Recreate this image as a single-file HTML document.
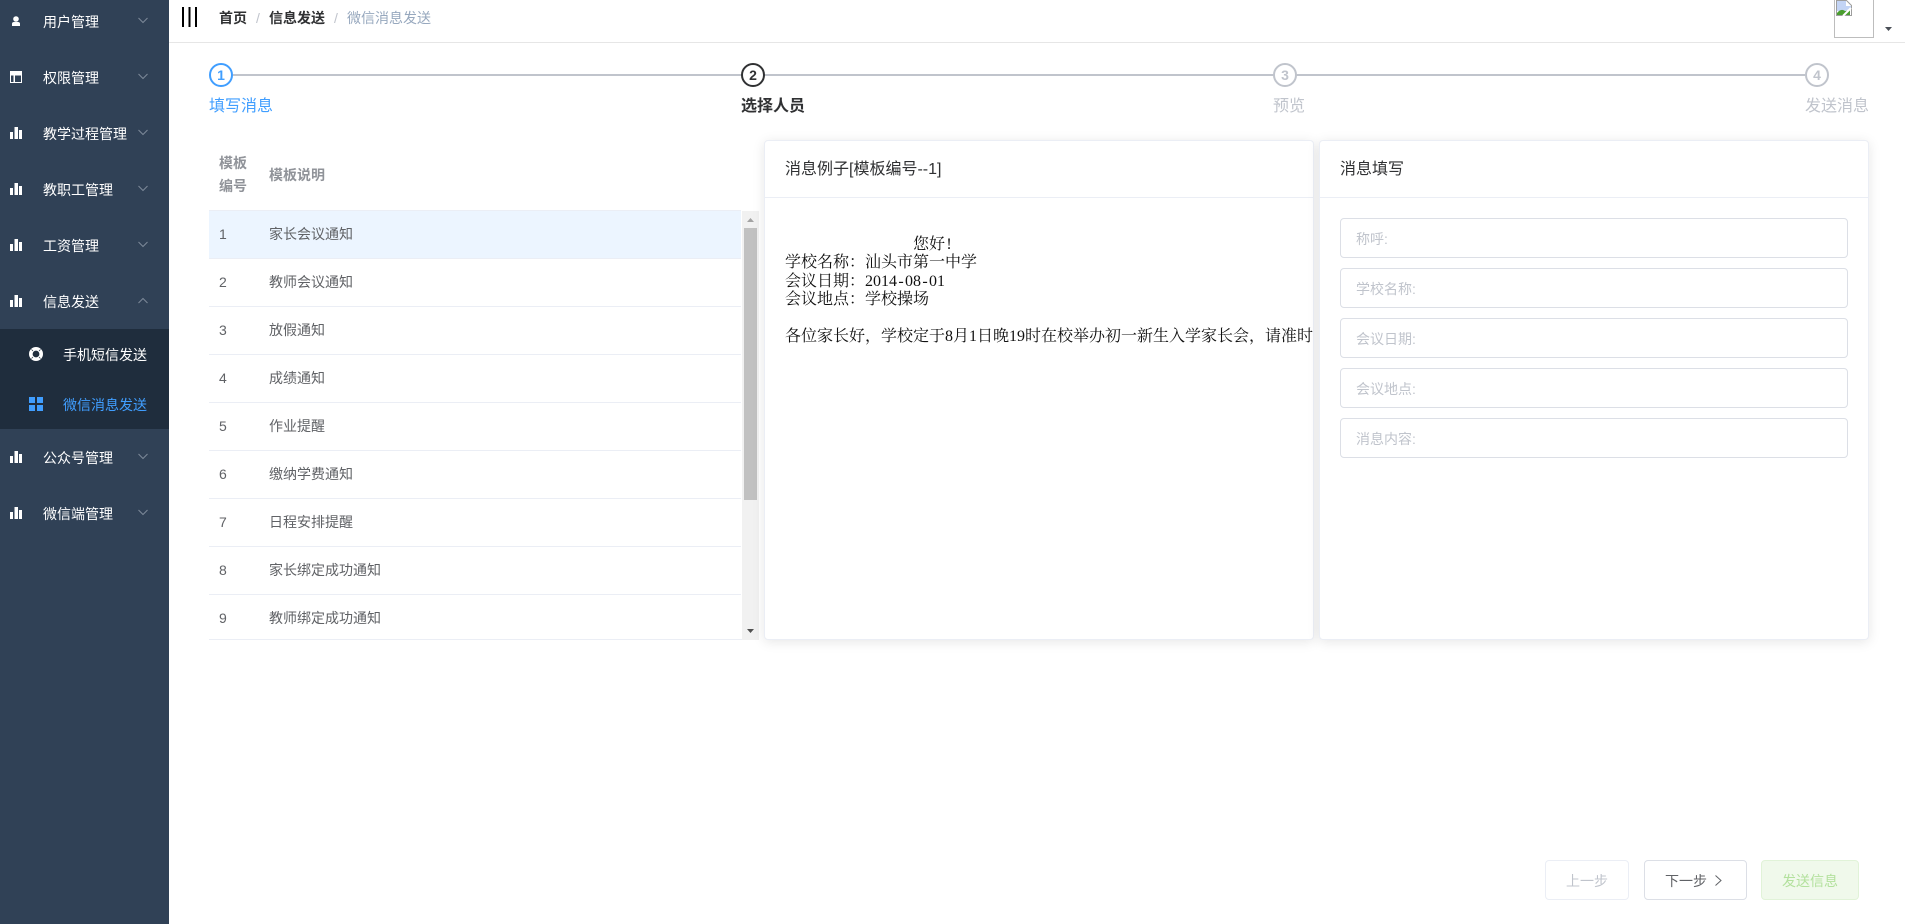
<!DOCTYPE html>
<html lang="zh-CN">
<head>
<meta charset="utf-8">
<title>微信消息发送</title>
<style>
html,body{margin:0;padding:0;width:1905px;height:924px;overflow:hidden;background:#fff}
body{font-family:"Liberation Sans","Noto Sans CJK SC",sans-serif;font-size:14px;color:#606266;position:relative}
.t{position:absolute;line-height:20px;white-space:nowrap}
.a{position:absolute}
#side{position:absolute;left:0;top:0;width:169px;height:924px;background:#304156;overflow:hidden}
#side .t{color:#fff}
#sub{position:absolute;left:0;top:329px;width:169px;height:100px;background:#1f2d3d}
.hl{position:absolute;left:209px;width:532px;height:1px;background:#ebeef5}
.n{left:219px}.d{left:269px}
.n,.d{color:#606266}
.th{color:#909399;font-weight:bold}
.card{position:absolute;top:140px;height:498px;background:#fff;border:1px solid #ebeef5;border-radius:4px;box-shadow:0 2px 12px rgba(0,0,0,.1);overflow:hidden;box-sizing:content-box}
.card .line{position:absolute;left:0;right:0;top:56px;height:1px;background:#ebeef5}
.inp{position:absolute;left:1340px;width:506px;height:38px;border:1px solid #dcdfe6;border-radius:4px;background:#fff}
.inp span{position:absolute;left:15px;top:10px;line-height:20px;color:#c0c4cc;white-space:nowrap}
.circle{position:absolute;top:63px;width:20px;height:20px;border:2px solid #c0c4cc;border-radius:50%;background:#fff;text-align:center;line-height:20px;font-size:14px;font-weight:bold;color:#c0c4cc}
.stept{position:absolute;top:96px;line-height:22px;font-size:16px;white-space:nowrap;color:#c0c4cc}
.btn{position:absolute;top:860px;height:38px;border:1px solid #dcdfe6;border-radius:4px;background:#fff}
.m{position:absolute;left:20px;line-height:20px;white-space:nowrap;font-family:"Liberation Serif","Noto Serif CJK SC",serif;font-size:16px;color:#111}
.m i{font-style:normal;display:inline-block;width:8px;text-align:center}
</style>
</head>
<body>
<div id="side">
  <div id="sub"></div>
  <svg class="a" style="left:0;top:0" width="169" height="540" viewBox="0 0 169 540">
    <!-- user -->
    <circle cx="16" cy="19" r="2.8" fill="#fff"/>
    <path d="M12 26v-2.200q0-1.800 2-1.800h4q2 0 2 1.800V26z" fill="#fff"/>
    <!-- table -->
    <path fill-rule="evenodd" d="M10 71h12v12H10zM11 75.500v6.500h2.500v-6.500zM15 75.500v6.500h6v-6.500z" fill="#fff"/>
    <!-- bars -->
    <path d="M10 132h3v7h-3zM14.500 127h3.500v12h-3.500zM19 130h3v9h-3z" fill="#fff"/>
    <path d="M10 188h3v7h-3zM14.500 183h3.500v12h-3.500zM19 186h3v9h-3z" fill="#fff"/>
    <path d="M10 244h3v7h-3zM14.500 239h3.500v12h-3.500zM19 242h3v9h-3z" fill="#fff"/>
    <path d="M10 300h3v7h-3zM14.500 295h3.500v12h-3.500zM19 298h3v9h-3z" fill="#fff"/>
    <path d="M10 456h3v7h-3zM14.500 451h3.500v12h-3.500zM19 454h3v9h-3z" fill="#fff"/>
    <path d="M10 512h3v7h-3zM14.500 507h3.500v12h-3.500zM19 510h3v9h-3z" fill="#fff"/>
    <!-- chevrons -->
    <g fill="none" stroke="#7d8a99" stroke-width="1">
      <path d="M138.500 18l4.500 4.500 4.500-4.500"/>
      <path d="M138.500 74l4.500 4.500 4.500-4.500"/>
      <path d="M138.500 130l4.500 4.500 4.500-4.500"/>
      <path d="M138.500 186l4.500 4.500 4.500-4.500"/>
      <path d="M138.500 242l4.500 4.500 4.500-4.500"/>
      <path d="M138.500 303l4.500-4.500 4.500 4.500"/>
      <path d="M138.500 454l4.500 4.500 4.500-4.500"/>
      <path d="M138.500 510l4.500 4.500 4.500-4.500"/>
    </g>
    <!-- lifebuoy -->
    <circle cx="36" cy="354" r="5.200" fill="none" stroke="#fff" stroke-width="3.600"/>
    <path d="M31.500 349.500l1.500 1.500M40.500 349.500l-1.500 1.500M31.500 358.500l1.500-1.500M40.500 358.500l-1.500-1.500" stroke="#1f2d3d" stroke-width=".7"/>
    <!-- grid -->
    <path d="M29 397h6v6h-6zM37 397h6v6h-6zM29 405h6v6h-6zM37 405h6v6h-6z" fill="#409eff"/>
  </svg>
  <div class="t" style="left:43px;top:12px">用户管理</div>
  <div class="t" style="left:43px;top:68px">权限管理</div>
  <div class="t" style="left:43px;top:124px">教学过程管理</div>
  <div class="t" style="left:43px;top:180px">教职工管理</div>
  <div class="t" style="left:43px;top:236px">工资管理</div>
  <div class="t" style="left:43px;top:292px">信息发送</div>
  <div class="t" style="left:63px;top:345px">手机短信发送</div>
  <div class="t" style="left:63px;top:395px;color:#409eff">微信消息发送</div>
  <div class="t" style="left:43px;top:448px">公众号管理</div>
  <div class="t" style="left:43px;top:504px">微信端管理</div>
</div>

<!-- header -->
<div class="a" style="left:169px;top:42px;width:1736px;height:1px;background:#e6e6e6"></div>
<svg class="a" style="left:180px;top:5px" width="20" height="24"><path d="M2 2h2v20H2zM8.500 2h2v20h-2zM15 2h2v20h-2z" fill="#000"/></svg>
<div class="t" style="left:219px;top:8px;font-weight:bold;color:#303133">首页</div>
<div class="t" style="left:256px;top:8px;color:#c0c4cc">/</div>
<div class="t" style="left:269px;top:8px;font-weight:bold;color:#303133">信息发送</div>
<div class="t" style="left:334px;top:8px;color:#c0c4cc">/</div>
<div class="t" style="left:347px;top:8px;color:#97a8be">微信消息发送</div>

<!-- avatar -->
<div class="a" style="left:1834px;top:-4px;width:38px;height:40px;border:1px solid #bdbdbd;overflow:hidden;background:#fff">
  <svg class="a" style="left:1px;top:3px" width="16" height="16" viewBox="0 0 16 16">
    <path d="M.500.500h10l5 5v10H.500z" fill="#fff" stroke="#9e9e9e"/>
    <path d="M1 1h9v5h5v2L9 11H1z" fill="#c3d4f5"/>
    <path d="M1 15v-2q4-5 8-2l5-1v5z" fill="#4a9e2f"/>
    <path d="M7 16l8-8" stroke="#fff" stroke-width="2"/>
  </svg>
</div>
<svg class="a" style="left:1884px;top:26px" width="9" height="6"><path d="M1 1h7L4.500 5z" fill="#4a4f57"/></svg>

<!-- steps -->
<div class="a" style="left:233px;top:74px;width:1572px;height:2px;background:#c0c4cc"></div>
<div class="circle" style="left:209px;border-color:#409eff;color:#409eff">1</div>
<div class="circle" style="left:741px;border-color:#303133;color:#303133">2</div>
<div class="circle" style="left:1273px">3</div>
<div class="circle" style="left:1805px">4</div>
<div class="stept" style="left:209px;color:#409eff">填写消息</div>
<div class="stept" style="left:741px;color:#303133;font-weight:bold">选择人员</div>
<div class="stept" style="left:1273px">预览</div>
<div class="stept" style="left:1805px">发送消息</div>

<!-- table -->
<div class="t th" style="left:219px;top:153px">模板</div>
<div class="t th" style="left:219px;top:176px">编号</div>
<div class="t th" style="left:269px;top:165px">模板说明</div>
<div class="a" style="left:209px;top:210px;width:532px;height:48px;background:#ecf5ff"></div>
<div class="hl" style="top:210px"></div>
<div class="hl" style="top:258px"></div>
<div class="hl" style="top:306px"></div>
<div class="hl" style="top:354px"></div>
<div class="hl" style="top:402px"></div>
<div class="hl" style="top:450px"></div>
<div class="hl" style="top:498px"></div>
<div class="hl" style="top:546px"></div>
<div class="hl" style="top:594px"></div>
<div class="hl" style="top:639px;width:550px"></div>
<div class="t n" style="top:224px">1</div><div class="t d" style="top:224px">家长会议通知</div>
<div class="t n" style="top:272px">2</div><div class="t d" style="top:272px">教师会议通知</div>
<div class="t n" style="top:320px">3</div><div class="t d" style="top:320px">放假通知</div>
<div class="t n" style="top:368px">4</div><div class="t d" style="top:368px">成绩通知</div>
<div class="t n" style="top:416px">5</div><div class="t d" style="top:416px">作业提醒</div>
<div class="t n" style="top:464px">6</div><div class="t d" style="top:464px">缴纳学费通知</div>
<div class="t n" style="top:512px">7</div><div class="t d" style="top:512px">日程安排提醒</div>
<div class="t n" style="top:560px">8</div><div class="t d" style="top:560px">家长绑定成功通知</div>
<div class="t n" style="top:608px">9</div><div class="t d" style="top:608px">教师绑定成功通知</div>
<!-- scrollbar -->
<div class="a" style="left:742px;top:211px;width:17px;height:429px;background:#f1f1f1"></div>
<div class="a" style="left:744px;top:228px;width:13px;height:272px;background:#c1c1c1"></div>
<svg class="a" style="left:746px;top:217px" width="9" height="6"><path d="M1 5h7L4.500 1z" fill="#a3a3a3"/></svg>
<svg class="a" style="left:746px;top:628px" width="9" height="6"><path d="M1 1h7L4.500 5z" fill="#505050"/></svg>

<!-- card 1 -->
<div class="card" style="left:764px;width:548px">
  <div class="line"></div>
  <div class="t" style="left:20px;top:18px;font-size:16px;line-height:22px;color:#303133">消息例子[模板编号--1]</div>
  <div class="m" style="left:148px;top:94px">您好<i>!</i></div>
  <div class="m" style="top:112px">学校名称：汕头市第一中学</div>
  <div class="m" style="top:131px">会议日期：2014<i>-</i>08<i>-</i>01</div>
  <div class="m" style="top:149px">会议地点：学校操场</div>
  <div class="m" style="top:186px">各位家长好，学校定于8月1日晚19时在校举办初一新生入学家长会，请准时参加。</div>
</div>

<!-- card 2 -->
<div class="card" style="left:1319px;width:548px">
  <div class="line"></div>
  <div class="t" style="left:20px;top:18px;font-size:16px;line-height:22px;color:#303133">消息填写</div>
</div>
<div class="inp" style="top:218px"><span>称呼:</span></div>
<div class="inp" style="top:268px"><span>学校名称:</span></div>
<div class="inp" style="top:318px"><span>会议日期:</span></div>
<div class="inp" style="top:368px"><span>会议地点:</span></div>
<div class="inp" style="top:418px"><span>消息内容:</span></div>

<!-- buttons -->
<div class="btn" style="left:1545px;width:82px;border-color:#ebeef5"></div>
<div class="t" style="left:1566px;top:871px;color:#c0c4cc">上一步</div>
<div class="btn" style="left:1644px;width:101px"></div>
<div class="t" style="left:1665px;top:871px;color:#606266">下一步</div>
<svg class="a" style="left:1714px;top:874px" width="9" height="13"><path d="M1.500 1.500l5.500 5-5.500 5" fill="none" stroke="#606266" stroke-width="1"/></svg>
<div class="btn" style="left:1761px;width:96px;background:#f0f9eb;border-color:#e1f3d8"></div>
<div class="t" style="left:1782px;top:871px;color:#b3e19d">发送信息</div>
</body>
</html>
